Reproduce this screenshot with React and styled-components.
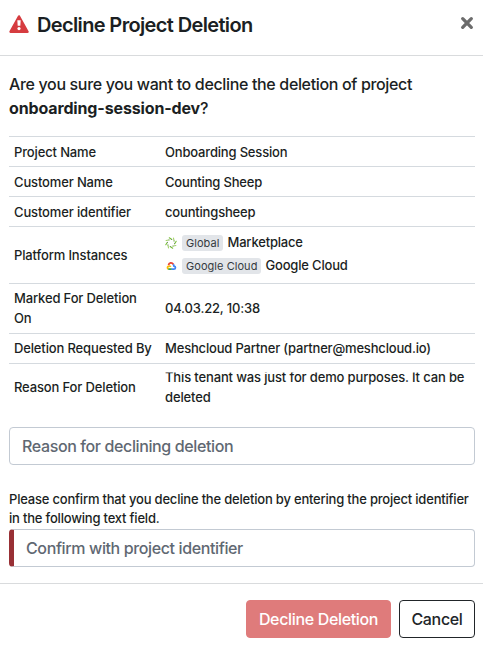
import React from "react";
import styled, { createGlobalStyle } from "styled-components";

const GlobalStyle = createGlobalStyle`
  *, *::before, *::after { box-sizing: border-box; }
  body {
    margin: 0;
    background: #fff;
    color: #1b1f23;
    font-family: Inter, "Liberation Sans", sans-serif;
    font-size: 16px;
    font-weight: 450;
    line-height: 24px;
    overflow: hidden;
  }
`;

const Modal = styled.main`
  display: flex;
  flex-direction: column;
  width: 483px;
  height: 654px;
  background: #fff;
`;

const Header = styled.header`
  display: flex;
  align-items: flex-start;
  height: 56px;
  padding: 10px 9px 0;
  border-bottom: 1px solid #d9dbdd;
`;

const WarningIcon = styled.svg`
  width: 20px;
  height: 20px;
  margin: 4px 8px 0 0;
  flex: none;
`;

const Title = styled.h1`
  margin: 0;
  flex: 1;
  font-size: 20px;
  line-height: 30px;
  font-weight: 580;
  letter-spacing: -0.64px;
  white-space: nowrap;
`;

const CloseButton = styled.button`
  display: flex;
  width: 14px;
  height: 14px;
  margin: 6px 0 0;
  padding: 0;
  border: 0;
  background: none;
  color: #6c6c6c;
`;

const Body = styled.section`
  display: flex;
  flex-direction: column;
  height: 527px;
  padding: 16px 8px 0 9px;
`;

const Question = styled.p`
  margin: 0 0 16px;
  font-size: 16px;
  line-height: 24px;
  letter-spacing: -0.345px;
  white-space: nowrap;
`;

const Strong = styled.strong`
  font-weight: 700;
  letter-spacing: -0.14px;
`;

const Details = styled.dl`
  margin: 0;
  font-size: 13px;
  line-height: 20px;
  height: 291px;
  letter-spacing: -0.18px;
`;

const Row = styled.div`
  display: grid;
  grid-template-columns: 151px 1fr;
  align-items: center;
  height: ${(p) => p.$height || 30}px;
  padding-bottom: ${(p) => p.$lift || 0}px;
  border-top: 1px solid #d5dadf;
`;

const Term = styled.dt`
  padding: 0 0 0 5px;
  letter-spacing: -0.14px;
  white-space: nowrap;
`;

const Value = styled.dd`
  margin: 0;
  padding-left: 5px;
  white-space: nowrap;
`;

const ReasonText = styled.div`
  height: 40px;
  letter-spacing: -0.145px;
  clip-path: inset(5.4px 0 0 0);
`;

const Platforms = styled.div`
  padding-bottom: 2px;
`;

const Platform = styled.div`
  display: flex;
  align-items: center;
  height: 23px;
`;

const PlatformName = styled.span`
  padding-bottom: 2px;
`;

const PlatformIcon = styled.svg`
  width: 12px;
  height: 12px;
  margin: 1px 5px 0 0;
  flex: none;
`;

const Badge = styled.span`
  height: 16px;
  margin-right: 4px;
  padding: 0 4px;
  border-radius: 3px;
  background: #e2e5e9;
  color: #343a40;
  font-size: 11px;
  font-weight: 400;
  line-height: 16px;
  letter-spacing: 0.05px;
`;

const Input = styled.input`
  flex: none;
  width: 100%;
  height: 38px;
  padding: 0 12px;
  border: 1px solid #c3cad3;
  border-left: ${(p) => (p.$required ? "5px solid #983035" : "1px solid #c3cad3")};
  border-radius: 4px;
  background: #fff;
  font: inherit;
  letter-spacing: -0.38px;
  &::placeholder { color: #5f6872; opacity: 1; }
`;

const Label = styled.label`
  display: block;
  margin-top: 25px;
  height: 39px;
  font-size: 13px;
  line-height: 19px;
  letter-spacing: -0.2px;
  white-space: nowrap;
`;

const Footer = styled.footer`
  display: flex;
  justify-content: flex-end;
  gap: 8px;
  height: 71px;
  padding: 16px 8px 0;
  border-top: 1px solid #d9dbdd;
`;

const Button = styled.button`
  width: ${(p) => (p.$danger ? 145 : 76)}px;
  height: 38px;
  padding: 0;
  border: 1px solid ${(p) => (p.$danger ? "#df7b7b" : "#212529")};
  border-radius: 4px;
  background: ${(p) => (p.$danger ? "#df7b7b" : "#fff")};
  color: ${(p) => (p.$danger ? "#fff" : "#212529")};
  font: inherit;
  letter-spacing: -0.34px;
  white-space: nowrap;
`;

const Warning = () => (
  <WarningIcon viewBox="0 0 20 20" aria-hidden="true">
    <path d="M10 2.3 18.6 17.8H1.4Z" fill="#d63c40" stroke="#d63c40" strokeWidth="2.2" strokeLinejoin="round" />
    <path d="M8.3 6.3h3.4l-.4 5.4H8.7Z" fill="#fff" />
    <circle cx="10" cy="14.6" r="1.6" fill="#fff" />
  </WarningIcon>
);

const Close = () => (
  <svg width="14" height="14" viewBox="0 0 14 14" aria-hidden="true">
    <path d="M2.7 2.7 11.3 11.3M11.3 2.7 2.7 11.3" stroke="currentColor" strokeWidth="3.3" strokeLinecap="round" />
  </svg>
);

const angles = [0, 45, 90, 135, 180, 225, 270, 315];

const MeshIcon = () => (
  <PlatformIcon viewBox="0 0 12 12" aria-hidden="true">
    {angles.map((a, i) => (
      <g key={a} transform={`rotate(${a} 6 6)`}>
        <path d="M4.3.8 6.5 2.2" stroke={i % 2 ? "#a4d36c" : "#76bd36"} strokeWidth="1.1" strokeLinecap="round" />
        <circle cx="6.8" cy="2.5" r=".5" fill="#58764a" />
      </g>
    ))}
  </PlatformIcon>
);

const GoogleCloudIcon = () => (
  <PlatformIcon viewBox="0 0 12 12" aria-hidden="true">
    <g fill="none" strokeWidth="1.9" transform="translate(.6 .5) scale(.94)">
      <path d="M3.1 5C3.5 2.2 6.6 1.5 8.4 4.2" stroke="#ea4335" />
      <path d="M8.1 4.1C8.9 5 9 5.5 9 6c2 .2 2 3.2-.3 3.2H6" stroke="#4285f4" />
      <path d="M6.3 9.2H3.8L2.6 8.8" stroke="#34a853" />
      <path d="M2.9 9C1.4 8.1 1.8 5.9 3.8 5.9c.8 0 1.3.4 1.6.9" stroke="#fbbc05" />
    </g>
  </PlatformIcon>
);

export default function App() {
  return (
    <>
      <GlobalStyle />
      <Modal role="dialog" aria-labelledby="title">
        <Header>
          <Warning />
          <Title id="title">Decline Project Deletion</Title>
          <CloseButton aria-label="Close"><Close /></CloseButton>
        </Header>
        <Body>
          <Question>
            Are you sure you want to decline the deletion of project
            <br />
            <Strong>onboarding-session-dev</Strong>?
          </Question>
          <Details>
            <Row><Term>Project Name</Term><Value>Onboarding Session</Value></Row>
            <Row><Term>Customer Name</Term><Value>Counting Sheep</Value></Row>
            <Row><Term>Customer identifier</Term><Value>countingsheep</Value></Row>
            <Row $height={57}>
              <Term>Platform Instances</Term>
              <Value>
                <Platforms>
                  <Platform><MeshIcon /><Badge>Global</Badge><PlatformName>Marketplace</PlatformName></Platform>
                  <Platform><GoogleCloudIcon /><Badge>Google Cloud</Badge><PlatformName>Google Cloud</PlatformName></Platform>
                </Platforms>
              </Value>
            </Row>
            <Row $height={50} $lift={1}><Term>Marked For Deletion<br />On</Term><Value>04.03.22, 10:38</Value></Row>
            <Row $lift={1}><Term>Deletion Requested By</Term><Value>Meshcloud Partner (partner@meshcloud.io)</Value></Row>
            <Row $height={48} $lift={1}>
              <Term>Reason For Deletion</Term>
              <Value>
                <ReasonText>
                  This tenant was just for demo purposes. It can be
                  <br />
                  deleted
                </ReasonText>
              </Value>
            </Row>
          </Details>
          <Input placeholder="Reason for declining deletion" />
          <Label htmlFor="confirm">
            Please confirm that you decline the deletion by entering the project identifier
            <br />
            in the following text field.
          </Label>
          <Input id="confirm" $required placeholder="Confirm with project identifier" />
        </Body>
        <Footer>
          <Button $danger>Decline Deletion</Button>
          <Button>Cancel</Button>
        </Footer>
      </Modal>
    </>
  );
}
